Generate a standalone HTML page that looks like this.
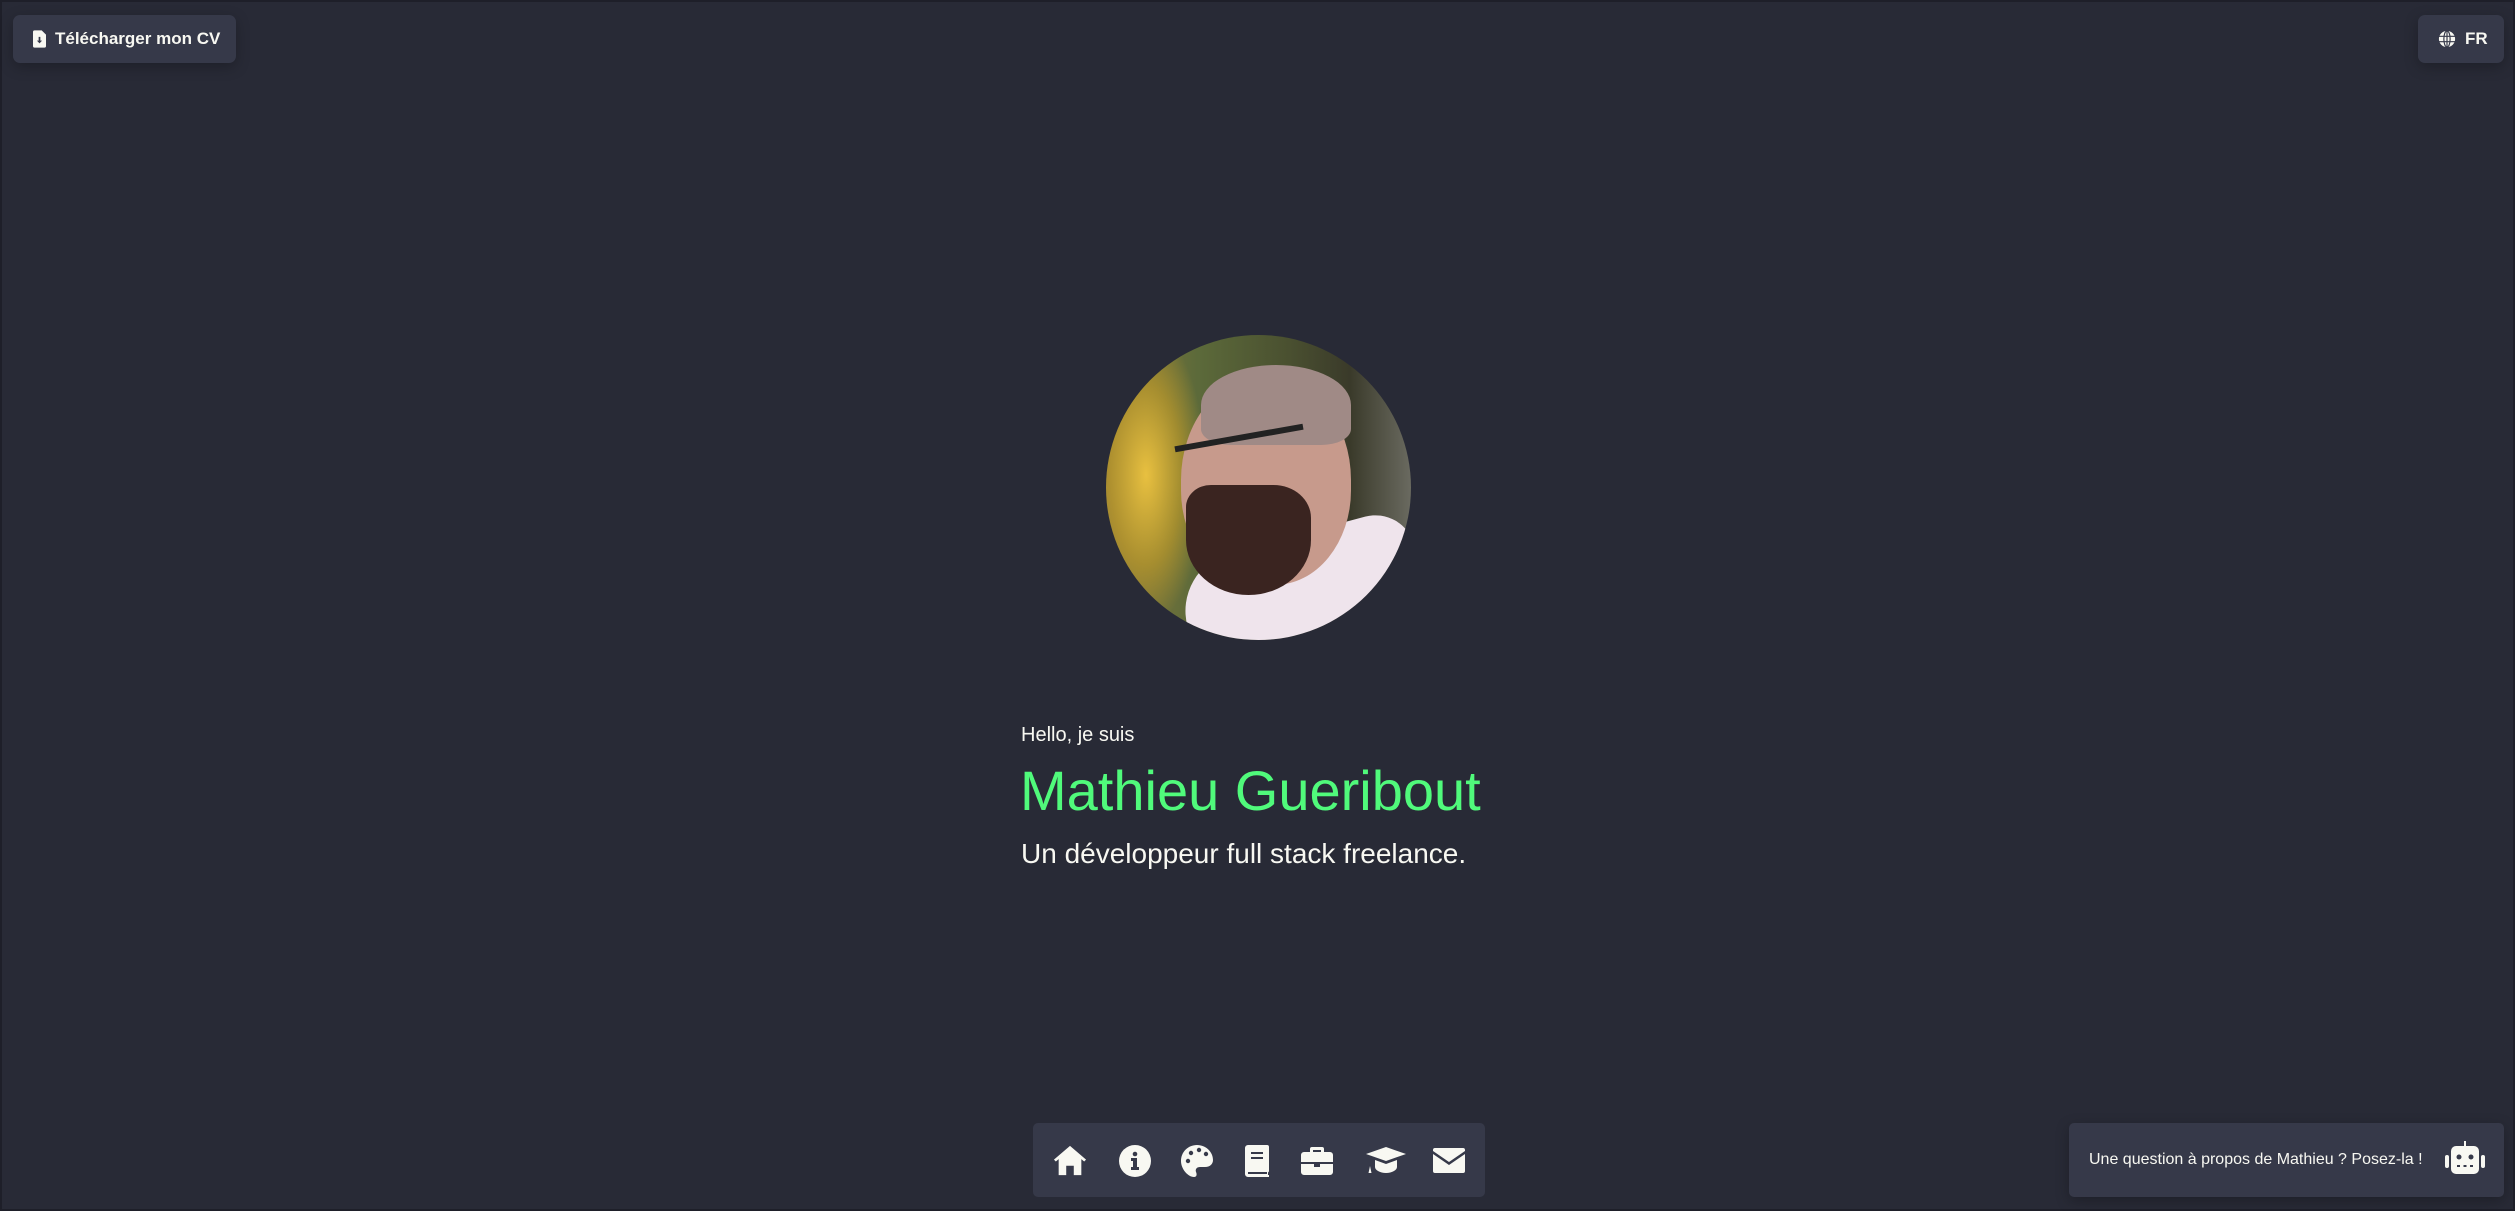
<!DOCTYPE html>
<html><head><meta charset="utf-8"><style>
html,body{margin:0;padding:0}
body{width:2515px;height:1211px;background:#282a36;position:relative;overflow:hidden;font-family:"Liberation Sans",sans-serif;color:#f8f8f2;box-shadow:inset 0 0 0 2px #1e1f29}
.btn{position:absolute;background:#363949;border-radius:7px;display:flex;align-items:center;font-weight:bold;font-size:17px;white-space:nowrap;box-shadow:0 4px 14px rgba(0,0,0,.25)}
.av{position:absolute;left:1106px;top:335px;width:305px;height:305px;border-radius:50%;overflow:hidden;
background:radial-gradient(ellipse 60px 150px at 40px 140px,#e8c040 0%,rgba(200,160,40,.6) 60%,transparent 100%),linear-gradient(90deg,#8a7a3a 0%,#5c6a3a 30%,#4a5030 60%,#3a3a2a 80%,#6a6a60 100%)}
.nav{position:absolute;left:1033px;top:1123px;width:452px;height:74px;background:#363949;border-radius:5px}
.nav svg{position:absolute;top:21px;width:34px;height:34px;fill:#f8f8f2}
</style></head><body>
<div class="btn" style="left:13px;top:15px;width:223px;height:48px"><svg style="margin-left:20px" width="13" height="18" viewBox="0 0 12 16"><path fill="#f8f8f2" d="M0 1.5A1.5 1.5 0 0 1 1.5 0H8l4 4v10.5A1.5 1.5 0 0 1 10.5 16h-9A1.5 1.5 0 0 1 0 14.5Z"/><path fill="#363949" d="M5.2 6h1.6v3.5h1.6L6 12 3.6 9.5h1.6z"/></svg><span style="margin-left:9px">Télécharger mon CV</span></div>
<div class="btn" style="left:2418px;top:15px;width:86px;height:48px"><svg style="margin-left:20px" width="18" height="18" viewBox="0 0 20 20"><circle cx="10" cy="10" r="9" fill="#f8f8f2"/><g stroke="#363949" stroke-width="1.3" fill="none"><ellipse cx="10" cy="10" rx="3.5" ry="9"/><path d="M1 7h18M1 13h18M10 1v18"/></g></svg><span style="margin-left:9px">FR</span></div>
<div class="av">
<div style="position:absolute;left:80px;top:200px;width:240px;height:140px;background:#efe4ec;border-radius:60px 40px 0 0;transform:rotate(-15deg)"></div>
<div style="position:absolute;left:75px;top:40px;width:170px;height:210px;background:#c79a8c;border-radius:50% 50% 45% 45%"></div>
<div style="position:absolute;left:95px;top:30px;width:150px;height:80px;background:#a08a86;border-radius:50% 50% 20% 20%"></div>
<div style="position:absolute;left:80px;top:150px;width:125px;height:110px;background:#3a2420;border-radius:20% 30% 50% 50%"></div>
<div style="position:absolute;left:68px;top:100px;width:130px;height:6px;background:#222;transform:rotate(-10deg)"></div>
</div>
<div style="position:absolute;left:1021px;top:724px;font-size:20px">Hello, je suis</div>
<div style="position:absolute;left:1020px;top:758px;font-size:56px;color:#50fa7b">Mathieu Gueribout</div>
<div style="position:absolute;left:1021px;top:838px;font-size:28px">Un développeur full stack freelance.</div>
<div class="nav">
<svg style="left:20px" viewBox="0 0 36 34"><path d="M18 1 1 15.5l2 2L6 15v17h8V22h8v10h8V15l3 2.5 2-2z"/></svg>
<svg style="left:85px" viewBox="0 0 34 34"><circle cx="17" cy="17" r="16"/><g fill="#363949"><circle cx="17" cy="10" r="2.3"/><path d="M13 14h6v9h2v3h-8v-3h2v-6h-2z"/></g></svg>
<svg style="left:147px" viewBox="0 0 34 34"><path d="M17 1C8 1 1 8 1 17c0 8 7 16 13 16 3 0 3-3 2-5-1-3 1-5 4-5h5c5 0 8-3 8-7C33 8 26 1 17 1z"/><g fill="#363949"><circle cx="8" cy="17" r="2.2"/><circle cx="11" cy="9" r="2.2"/><circle cx="19" cy="6" r="2.2"/><circle cx="26" cy="10" r="2.2"/></g></svg>
<svg style="left:207px" viewBox="0 0 34 34"><path d="M5 4a3 3 0 0 1 3-3h19a2 2 0 0 1 2 2v24a2 2 0 0 1-1 1.5V31h1v2H8a3 3 0 0 1-3-3z"/><g fill="#363949"><rect x="11" y="8" width="12" height="2"/><rect x="11" y="13" width="12" height="2"/><rect x="8" y="28" width="19" height="2"/></g></svg>
<svg style="left:267px" viewBox="0 0 34 34"><path d="M12 3h10a2 2 0 0 1 2 2v3h6a3 3 0 0 1 3 3v7H1v-7a3 3 0 0 1 3-3h6V5a2 2 0 0 1 2-2zm1 3v2h8V6zM1 20h13v3h6v-3h13v8a3 3 0 0 1-3 3H4a3 3 0 0 1-3-3z"/></svg>
<svg style="left:333px;width:40px" viewBox="0 0 40 34"><path d="M20 3 0 10l20 7 20-7zM9 16v7c0 3 5 6 11 6s11-3 11-6v-7l-11 4zM4 12v10l-1.5 7h3L4 22z"/></svg>
<svg style="left:399px" viewBox="0 0 34 34"><path d="M3 4h28a2 2 0 0 1 2 2v1L17 18 1 7V6a2 2 0 0 1 2-2zM1 10l16 11 16-11v17a2 2 0 0 1-2 2H3a2 2 0 0 1-2-2z"/></svg>
</div>
<div class="btn" style="left:2069px;top:1123px;width:435px;height:74px;font-weight:normal;font-size:16px;border-radius:5px"><span style="margin-left:20px">Une question à propos de Mathieu ? Posez-la !</span>
<svg style="position:absolute;left:375px;top:18px" width="42" height="36" viewBox="0 0 42 36"><g fill="#f8f8f2"><rect x="20" y="0" width="2" height="6"/><rect x="7" y="5" width="28" height="28" rx="5"/><rect x="1" y="14" width="4" height="13" rx="2"/><rect x="37" y="14" width="4" height="13" rx="2"/></g><g fill="#363949"><circle cx="15" cy="16" r="2.5"/><circle cx="27" cy="16" r="2.5"/><rect x="13" y="24" width="3" height="2"/><rect x="19.5" y="24" width="3" height="2"/><rect x="26" y="24" width="3" height="2"/></g></svg></div>
</body></html>
